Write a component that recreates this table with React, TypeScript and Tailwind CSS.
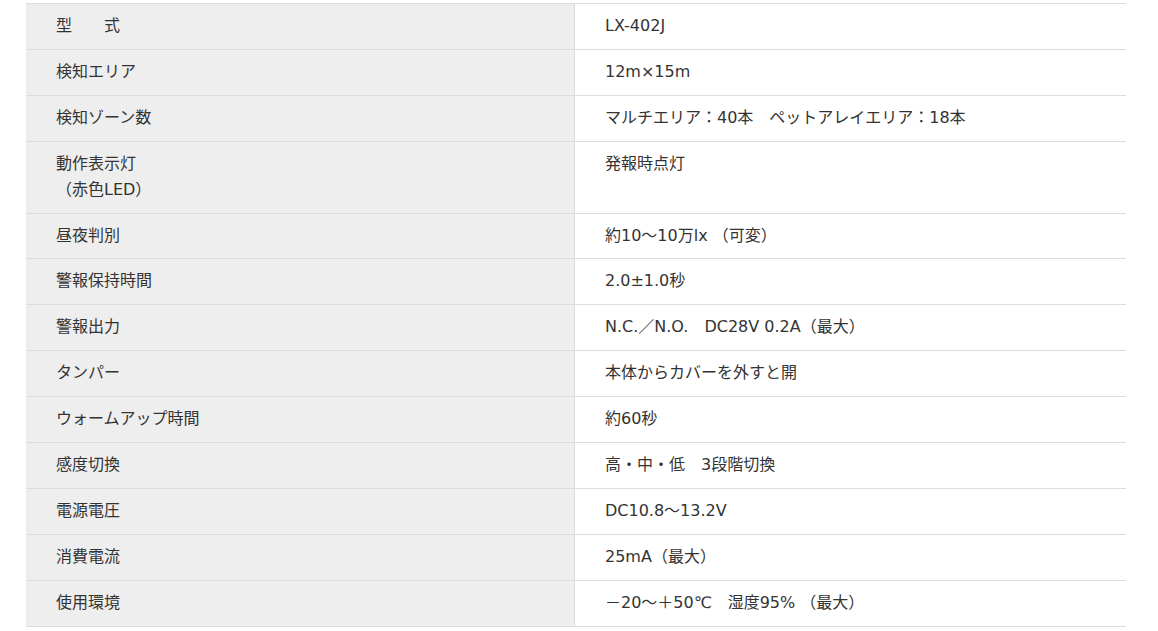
import React from "react";

const rows: [React.ReactNode, React.ReactNode][] = [
  ["型\u3000\u3000式", "LX-402J"],
  ["検知エリア", "12m×15m"],
  ["検知ゾーン数", "マルチエリア：40本\u3000ペットアレイエリア：18本"],
  [
    <>
      動作表示灯
      <br />
      （赤色LED）
    </>,
    "発報時点灯",
  ],
  ["昼夜判別", "約10～10万lx （可変）"],
  ["警報保持時間", "2.0±1.0秒"],
  ["警報出力", "N.C.／N.O.\u3000DC28V 0.2A（最大）"],
  ["タンパー", "本体からカバーを外すと開"],
  ["ウォームアップ時間", "約60秒"],
  ["感度切換", "高・中・低\u30003段階切換"],
  ["電源電圧", "DC10.8～13.2V"],
  ["消費電流", "25mA（最大）"],
  ["使用環境", "－20～＋50℃\u3000湿度95% （最大）"],
];

export default function App() {
  return (
    <div
      className="w-[1158px] h-[631px] bg-white pt-[3px] pl-[26px] text-[16px] text-[#333] overflow-hidden"
      style={{ fontFamily: '"DejaVu Sans", "Noto Sans CJK JP", sans-serif' }}
    >
      <div className="w-[1100px] border-t border-[#dcdcdc]">
        {rows.map(([k, v], i) => (
          <div key={i} className="flex border-b border-[#dcdcdc]">
            <div className="w-[549px] bg-[#eeeeee] border-r border-[#dcdcdc] pl-[30px] pt-[9px] pb-[9.9px] leading-[26px]">
              {k}
            </div>
            <div className="flex-1 pl-[30px] pt-[9px] pb-[9.9px] leading-[26px]">{v}</div>
          </div>
        ))}
      </div>
    </div>
  );
}
